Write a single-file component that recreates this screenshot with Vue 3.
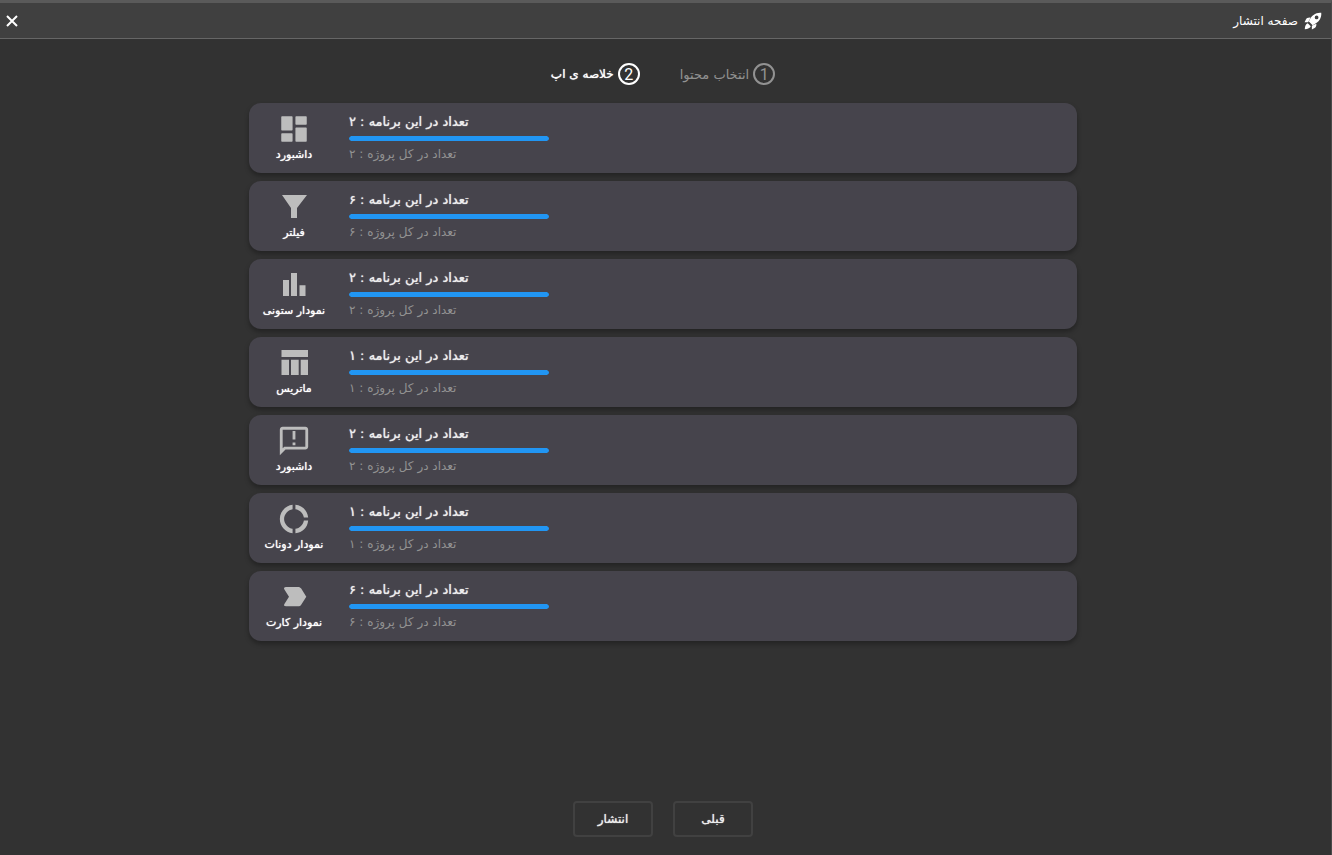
<template>
  <section class="publish-dialog" dir="rtl">
    <header class="dialog-header">
      <h1 class="dialog-title">
        <svg class="rocket-icon" viewBox="0 0 24 24" aria-hidden="true">
          <path :d="rocket" />
        </svg>
        <span>صفحه انتشار</span>
      </h1>
      <button class="close-btn" type="button" aria-label="بستن">
        <svg viewBox="0 0 12 12" aria-hidden="true">
          <path d="M1 1l10 10M11 1L1 11" />
        </svg>
      </button>
    </header>

    <main class="dialog-body">
      <ol class="steps">
        <li v-for="step in steps" :key="step.number" class="step" :class="step.number === current ? 'active-step' : ''">
          <span class="step-number">{{ step.number }}</span>
          <span>{{ step.title }}</span>
        </li>
      </ol>

      <ul class="summary-list">
        <li v-for="(item, index) in items" :key="index" class="summary-card">
          <div class="card-type">
            <svg class="card-icon" :viewBox="item.icon.box" aria-hidden="true">
              <path :d="item.icon.path" />
            </svg>
            <span>{{ item.label }}</span>
          </div>
          <div class="card-counts">
            <p class="count-app">تعداد در این برنامه : {{ toPersian(item.inApp) }}</p>
            <div class="progress" role="progressbar" :aria-label="item.label" :aria-valuenow="percent(item)">
              <div class="progress-bar" :style="{ width: percent(item) + '%' }"></div>
            </div>
            <p class="count-project">تعداد در کل پروژه : {{ toPersian(item.inProject) }}</p>
          </div>
        </li>
      </ul>

      <footer class="actions">
        <button class="action-btn" type="button" @click="current = 1">قبلی</button>
        <button class="action-btn" type="button">انتشار</button>
      </footer>
    </main>
  </section>
</template>

<script setup>
import { ref } from 'vue'

const current = ref(2)

const steps = [
  { number: 1, title: 'انتخاب محتوا' },
  { number: 2, title: 'خلاصه ی اپ' }
]

const rocket = 'M23 1C16 .3 10 4 6.5 12.5L11.500 17.500C20 14 23.700 8 23 1zM16.800 4.700A2.500 2.500 0 1 1 16.800 9.700A2.500 2.500 0 1 1 16.800 4.700zM8.500 7.500C5 7.300 3.300 8.500 2.200 10.500L.8 13.500L5.600 13.500zM16.500 15.500C16.700 19 15.500 20.700 13.500 21.800L10.500 23.200L10.500 18.400zM5 15C2.500 16 1.300 18.500 1 23C5.500 22.700 8 21.500 9 19z'

const icons = {
  dashboard: {
    box: '0 0 24 24',
    path: 'M3.5 13h7c.3 0 .5-.2.5-.5v-9c0-.3-.2-.5-.5-.5h-7c-.3 0-.5.2-.5.5v9c0 .3.2.5.5.5zm0 8h7c.3 0 .5-.2.5-.5v-5c0-.3-.2-.5-.5-.5h-7c-.3 0-.5.2-.5.5v5c0 .3.2.5.5.5zm10 0h7c.3 0 .5-.2.5-.5v-9c0-.3-.2-.5-.5-.5h-7c-.3 0-.5.2-.5.5v9c0 .3.2.5.5.5zM13 3.5v5c0 .3.2.5.5.5h7c.3 0 .5-.2.5-.5v-5c0-.3-.2-.5-.5-.5h-7c-.3 0-.5.2-.5.5z'
  },
  filter: {
    box: '0 0 34 34',
    path: 'M5 5h25L20 18v10h-6V18z'
  },
  bars: {
    box: '0 0 34 34',
    path: 'M6 12h6v16H6zM14 5h6v23h-6zM22.5 17.3h6V28h-6z'
  },
  matrix: {
    box: '0 0 34 34',
    path: 'M4.500 4H31v7H4.500zM4.500 13.700H12V29H4.500zM14 13.700h7.700V29H14zM23.700 13.700H31V29h-7.300z'
  },
  message: {
    box: '0 0 24 24',
    path: 'M20 2H4c-1.1 0-1.99.9-1.99 2L2 22l4-4h14c1.1 0 2-.9 2-2V4c0-1.1-.9-2-2-2zm0 14H5.17L4 17.17V4h16v12zM11 5h2v6h-2zM11 13h2v2h-2z'
  },
  donut: {
    box: '0 0 24 24',
    path: 'M11 5.08V2c-5 .5-9 4.81-9 10s4 9.5 9 10v-3.08c-3-.48-6-3.4-6-6.92s3-6.44 6-6.92zM18.97 11H22c-.47-5-4-8.53-9-9v3.08C16 5.51 18.54 8 18.97 11zM13 18.92V22c5-.47 8.53-4 9-9h-3.03c-.43 3-2.97 5.49-5.97 5.92z'
  },
  card: {
    box: '0 0 34 34',
    path: 'M9 7h12c1.5 0 2.5.6 3.2 1.6l5.1 8.1-5.1 8c-.7 1.1-1.7 1.6-3.2 1.6H9c-1.7 0-2.5-1-1.6-2.3l4.6-7.300-4.600-7.300C6.500 8 7.300 7 9 7z'
  }
}

const items = [
  { label: 'داشبورد', icon: icons.dashboard, inApp: 2, inProject: 2 },
  { label: 'فیلتر', icon: icons.filter, inApp: 6, inProject: 6 },
  { label: 'نمودار ستونی', icon: icons.bars, inApp: 2, inProject: 2 },
  { label: 'ماتریس', icon: icons.matrix, inApp: 1, inProject: 1 },
  { label: 'داشبورد', icon: icons.message, inApp: 2, inProject: 2 },
  { label: 'نمودار دونات', icon: icons.donut, inApp: 1, inProject: 1 },
  { label: 'نمودار کارت', icon: icons.card, inApp: 6, inProject: 6 }
]

const percent = (item) => Math.round(item.inApp / item.inProject * 100)

const toPersian = (num) => String(num).replace(/\d/g, (d) => '۰۱۲۳۴۵۶۷۸۹'[d])
</script>

<style>
body {
  background-color: #5a5a5a;
}
</style>

<style scoped>
.publish-dialog {
  box-sizing: border-box;
  display: flex;
  flex-direction: column;
  min-height: 100vh;
  border-top: 3px solid #5a5a5a;
  border-right: 1px solid #4a4a4a;
  background-color: #323232;
  color: #fff;
  font-family: "DejaVu Sans", sans-serif;
  font-size: 12px;
}

.dialog-header {
  display: flex;
  align-items: center;
  justify-content: space-between;
  height: 35px;
  padding: 0 9px 0 4px;
  background-color: #404040;
  border-bottom: 1px solid #666;
}

.dialog-title {
  display: flex;
  align-items: center;
  gap: 6px;
  margin: 0;
  font-size: 12px;
  font-weight: normal;
}

.rocket-icon {
  width: 18px;
  height: 18px;
  fill: #fff;
}

.close-btn {
  display: flex;
  padding: 2px;
  border: 0;
  background: none;
  cursor: pointer;
}

.close-btn svg {
  width: 12px;
  height: 12px;
  fill: none;
  stroke: #fff;
  stroke-width: 2;
}

.dialog-body {
  flex: 1;
  display: flex;
  flex-direction: column;
  align-items: center;
  padding: 24px 5px 18px 0;
}

.steps {
  display: flex;
  gap: 40px;
  margin: 0;
  padding: 0;
  list-style-type: none;
}

.step {
  display: flex;
  align-items: center;
  gap: 4px;
  height: 22px;
  font-size: 13px;
  color: #929292;
}

.active-step {
  font-size: 12px;
  color: #fff;
  text-shadow: 0 0 1px #fff;
}

.step-number {
  box-sizing: border-box;
  width: 22px;
  height: 22px;
  border: 2px solid currentColor;
  border-radius: 50%;
  font-family: Roboto, sans-serif;
  font-size: 16px;
  line-height: 19px;
  text-align: center;
  text-shadow: none;
}

.summary-list {
  display: flex;
  flex-direction: column;
  gap: 8px;
  width: 100%;
  max-width: 828px;
  margin: 18px 0;
  padding: 0;
  list-style-type: none;
}

.summary-card {
  display: flex;
  direction: ltr;
  gap: 10px;
  height: 70px;
  border-radius: 12px;
  background-color: #46444c;
  box-shadow: 0 3px 5px rgba(0, 0, 0, 0.3);
}

.card-type {
  display: flex;
  flex-direction: column;
  align-items: center;
  width: 90px;
  padding-top: 9px;
  font-size: 11px;
  line-height: 18px;
  white-space: nowrap;
  text-shadow: 0 0 1px #fff;
}

.card-icon {
  width: 34px;
  height: 34px;
  fill: #bdbdbd;
}

.card-counts {
  width: 200px;
  padding-top: 9px;
}

.count-app,
.count-project {
  margin: 0;
  direction: rtl;
  text-align: left;
  line-height: 20px;
  white-space: nowrap;
}

.count-app {
  font-size: 13px;
  color: #eee;
  text-shadow: 0 0 1px #eee;
}

.count-project {
  margin-top: 3px;
  font-size: 12px;
  color: #929292;
}

.progress {
  height: 5px;
  margin-top: 4px;
  border-radius: 3px;
  overflow: hidden;
}

.progress-bar {
  height: 100%;
  border-radius: 3px;
  background-color: #2196f3;
}

.actions {
  display: flex;
  gap: 20px;
  margin-top: auto;
}

.action-btn {
  width: 80px;
  height: 36px;
  padding: 0;
  border: 2px solid #414141;
  border-radius: 4px;
  background: none;
  color: #eee;
  font-family: inherit;
  font-size: 12px;
  text-shadow: 0 0 1px #eee;
  cursor: pointer;
}

.action-btn:hover {
  background-color: #3c3c3c;
}
</style>
